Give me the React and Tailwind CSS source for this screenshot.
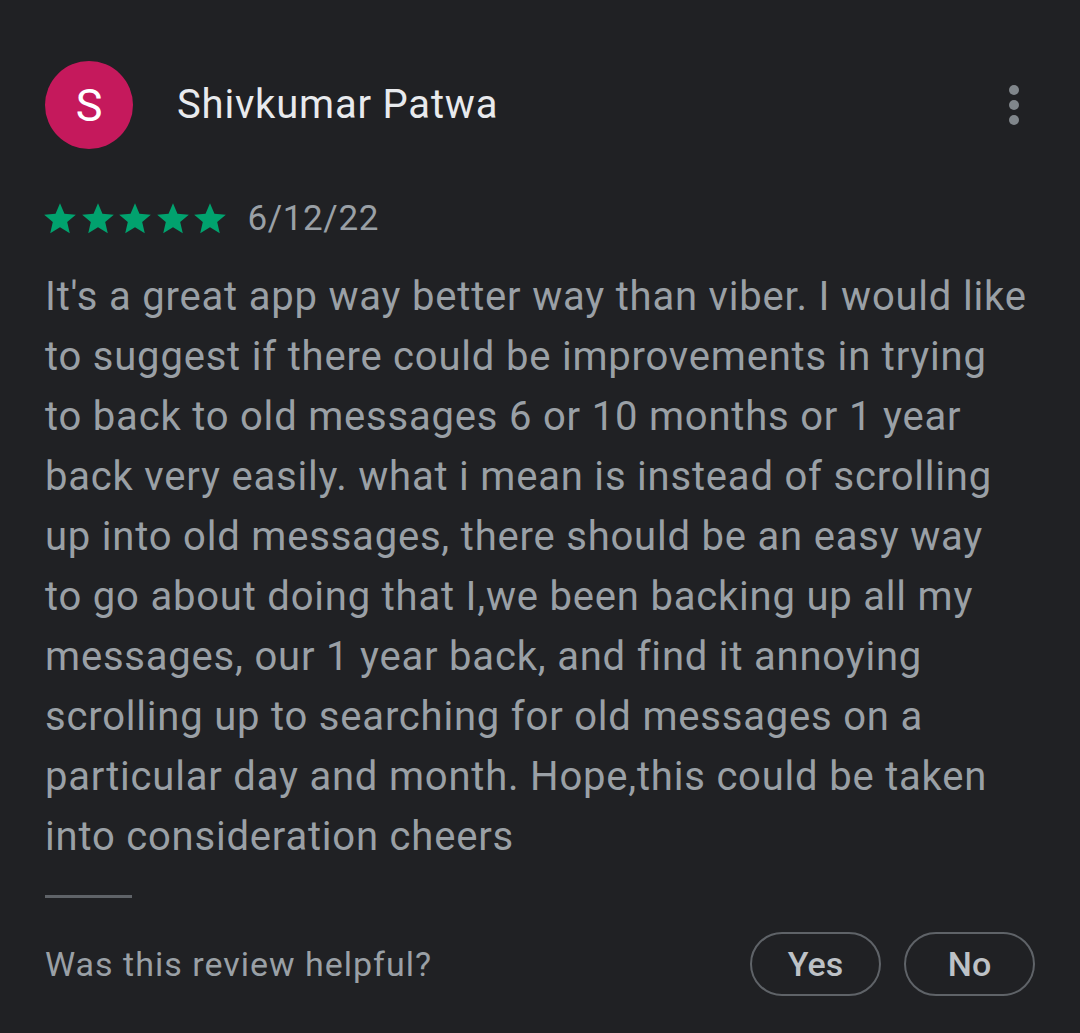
import React from "react";

const reviewText =
    "It's a great app way better way than viber. I would like to suggest if there could be improvements in trying to back to old messages 6 or 10 months or 1 year back very easily. what i mean is instead of scrolling up into old messages, there should be an easy way to go about doing that I,we been backing up all my messages, our 1 year back, and find it annoying scrolling up to searching for old messages on a particular day and month. Hope,this could be taken into consideration cheers";

function Star() {
    return (
        <svg viewBox="0 0 24 24" className="w-[38px] h-[38px] -mr-[0.5px]" fill="#01a26e">
            <path d="M12 17.27L18.18 21l-1.64-7.03L22 9.24l-7.19-.61L12 2 9.19 8.63 2 9.24l5.46 4.73L5.82 21z" />
        </svg>
    );
}

export default function App() {
    return (
        <div
            className="w-[1080px] h-[1033px] bg-[#202124] px-[45px] pt-[61px]"
            style={{ fontFamily: "Roboto, 'Noto Sans', sans-serif" }}
        >
            <header className="flex items-center">
                <div className="w-[88px] h-[88px] rounded-full bg-[#c5195c] flex items-center justify-center text-white text-[45px] leading-none">
                    S
                </div>
                <span className="ml-[44px] text-[40px] text-[#e8eaed] tracking-[0.8px]">Shivkumar Patwa</span>
                <div className="ml-auto mr-[16px] flex flex-col gap-[5px]">
                    <span className="w-[10px] h-[10px] rounded-full bg-[#80868b]" />
                    <span className="w-[10px] h-[10px] rounded-full bg-[#80868b]" />
                    <span className="w-[10px] h-[10px] rounded-full bg-[#80868b]" />
                </div>
            </header>

            <div className="flex items-center mt-[51px] h-[38px]">
                <div className="flex -ml-[4px]">
                    <Star />
                    <Star />
                    <Star />
                    <Star />
                    <Star />
                </div>
                <span className="ml-[19px] text-[35px] tracking-[0.6px] text-[#9aa0a6]">6/12/22</span>
            </div>

            <p className="mt-[29px] text-[40px] leading-[60px] tracking-[0.8px] text-[#9aa0a6] w-[982px]">
                {reviewText}
            </p>

            <div className="w-[87px] h-[3px] bg-[#5f6368] mt-[28px]" />

            <footer className="flex items-center mt-[34px]">
                <span className="text-[34px] tracking-[1px] text-[#9aa0a6]">Was this review helpful?</span>
                <div className="ml-auto flex gap-[23px]">
                    <button className="w-[131px] h-[64px] rounded-full border-2 border-[#5f6368] text-[34px] text-[#bdc1c6] font-medium">
                        Yes
                    </button>
                    <button className="w-[131px] h-[64px] rounded-full border-2 border-[#5f6368] text-[34px] text-[#bdc1c6] font-medium">
                        No
                    </button>
                </div>
            </footer>
        </div>
    );
}
